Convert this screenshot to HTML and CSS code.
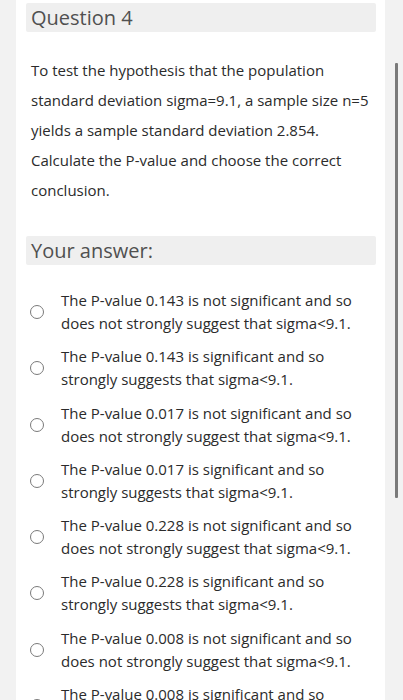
FILE: index.html
```html
<!DOCTYPE html>
<html>
<head>
<meta charset="utf-8">
<link rel="stylesheet" href="styles.css">
</head>
<body>
<div class="card">
  <div class="heading">Question 4</div>
  <p class="question">To test the hypothesis that the population standard deviation sigma=9.1, a sample size n=5 yields a sample standard deviation 2.854. Calculate the P-value and choose the correct conclusion.</p>
  <div class="heading answer-head">Your answer:</div>
  <ul class="options">
    <li class="option"><span class="radio"></span><span class="label">The P-value 0.143 is not significant and so does not strongly suggest that sigma&lt;9.1.</span></li>
    <li class="option"><span class="radio"></span><span class="label">The P-value 0.143 is significant and so strongly suggests that sigma&lt;9.1.</span></li>
    <li class="option"><span class="radio"></span><span class="label">The P-value 0.017 is not significant and so does not strongly suggest that sigma&lt;9.1.</span></li>
    <li class="option"><span class="radio"></span><span class="label">The P-value 0.017 is significant and so strongly suggests that sigma&lt;9.1.</span></li>
    <li class="option"><span class="radio"></span><span class="label">The P-value 0.228 is not significant and so does not strongly suggest that sigma&lt;9.1.</span></li>
    <li class="option"><span class="radio"></span><span class="label">The P-value 0.228 is significant and so strongly suggests that sigma&lt;9.1.</span></li>
    <li class="option"><span class="radio"></span><span class="label">The P-value 0.008 is not significant and so does not strongly suggest that sigma&lt;9.1.</span></li>
    <li class="option"><span class="radio"></span><span class="label">The P-value 0.008 is significant and so strongly suggests that sigma&lt;9.1.</span></li>
  </ul>
</div>
<div class="scrollbar"></div>
</body>
</html>
```
FILE: styles.css
```css
html, body {
  margin: 0;
  padding: 0;
  background: #f2f2f2;
  height: 700px;
  overflow: hidden;
}
body {
  font-family: "Open Sans", "Noto Sans", sans-serif;
  color: #2b2b2b;
  position: relative;
}
.card {
  margin-left: 16px;
  width: 369px;
  background: #fff;
  padding: 3px 9px 0 10px;
  box-sizing: border-box;
  min-height: 700px;
}
.heading {
  background: #efefef;
  height: 29px;
  line-height: 29px;
  font-size: 20px;
  color: #505050;
  padding-left: 5px;
  border-radius: 2px;
}
.question {
  margin: 23px 0 0 0;
  padding: 0 0 0 5px;
  font-size: 15px;
  line-height: 30px;
  color: #2b2b2b;
}
.answer-head {
  margin-top: 31px;
}
.options {
  list-style: none;
  margin: 24px 0 0 0;
  padding: 0;
  display: flex;
  flex-direction: column;
  gap: 10.3px;
}
.option {
  display: flex;
  align-items: center;
  font-size: 15px;
  line-height: 23px;
}
.radio {
  flex: none;
  width: 12px;
  height: 12px;
  border: 1.6px solid #7a7a7a;
  border-radius: 50%;
  margin-left: 4px;
  margin-right: 17px;
}
.label {
  flex: 1;
  padding-right: 6px;
}
.scrollbar {
  position: absolute;
  left: 395px;
  top: 63px;
  width: 3px;
  height: 435px;
  background: #7a7a7a;
  border-radius: 1px;
}
```
